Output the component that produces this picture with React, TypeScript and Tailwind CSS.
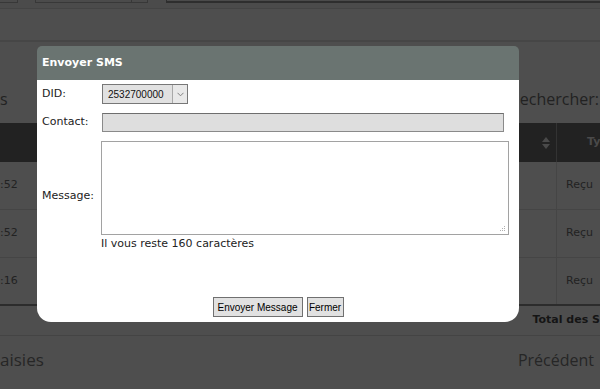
export default function App() {
  const rows = [":52", ":52", ":16"];

  return (
    <div className="relative w-[600px] h-[389px] overflow-hidden bg-[#4e4e4e] font-['DejaVu_Sans',sans-serif]">
      {/* page behind the overlay */}
      <div className="flex flex-col">
        <div className="flex h-[9px] items-start border-b border-[#444444] bg-[#4b4b4b]">
          <div className="h-[3px] w-[18px] border-b border-r border-[#383838]" />
          <div className="ml-[17px] flex h-[3px] w-[113px] border-x border-b border-[#383838]">
            <div className="w-[96px] border-r border-[#383838]" />
          </div>
          <div className="ml-[18px] h-[3px] flex-1 border-l border-b-2 border-[#2e2e2e]" />
        </div>
        <div className="h-[31px]" />
        <div className="h-[2px] bg-[#464646]" />
        <div className="flex h-[81px] items-end justify-between pb-[12px] text-[16px] text-[#222222] font-['Open_Sans',sans-serif]">
          <span>s</span>
          <span className="mr-[1px]">echercher:</span>
        </div>
        <div className="flex h-[39px] bg-[#222222]">
          <div className="flex flex-1 items-center justify-end pr-[6px]">
            <svg width="8" height="12" viewBox="0 0 8 12">
              <path d="M4 0 L8 5 L0 5 Z" fill="#4a4a4a" />
              <path d="M4 12 L8 7 L0 7 Z" fill="#4a4a4a" />
            </svg>
          </div>
          <div className="flex w-[44px] items-center border-l border-[#333333] pl-[30px] text-[11px] font-bold text-[#4a4a4a]">
            Ty
          </div>
        </div>
        {rows.map((t, i) => (
          <div
            key={i}
            className={
              i === 2
                ? "flex h-[48px] border-b-2 border-[#2c2c2c] text-[11px] text-[#222222]"
                : "flex h-[48px] border-b border-[#454545] text-[11px] text-[#222222]"
            }
          >
            <div className="flex flex-1 items-center">{t}</div>
            <div className="flex w-[44px] items-center border-l border-[#454545] pl-[9px]">Reçu</div>
          </div>
        ))}
        <div className="flex h-[30px] items-center justify-end border-b border-[#444444] text-[11px] font-bold text-[#151515] whitespace-nowrap">
          <span>Total des S</span>
        </div>
        <div className="flex h-[48px] items-center justify-between text-[17px] text-[#262626] font-['Open_Sans',sans-serif]">
          <span>aisies</span>
          <span className="mr-[6px] text-[16px]">Précédent</span>
        </div>
      </div>

      {/* dialog */}
      <div className="absolute left-[37px] top-[46px] flex h-[276px] w-[482px] flex-col">
        <div className="flex h-[34px] items-center rounded-t-[5px] bg-[#6a7471] px-[5px] text-[11px] font-bold text-white">
          Envoyer SMS
        </div>
        <div className="flex flex-1 flex-col rounded-b-[14px] bg-white px-[5px] text-[11px] text-[#222222]">
          <div className="mt-[4px] flex h-[20px] items-center">
            <div className="w-[60px]">DID:</div>
            <div className="flex h-[20px] w-[86px] border border-[#777777] bg-[#e1e1e1]">
              <div className="flex flex-1 items-center pl-[5px] font-['Liberation_Sans',sans-serif] text-[10px] text-[#111111]">
                2532700000
              </div>
              <div className="flex w-[15px] items-center justify-center border-l border-[#a8a8a8] bg-[#e8e8e8]">
                <svg width="7" height="5" viewBox="0 0 7 5">
                  <path d="M0.5 0.8 L3.5 3.8 L6.5 0.8" fill="none" stroke="#808080" strokeWidth="1" />
                </svg>
              </div>
            </div>
          </div>
          <div className="mt-[9px] flex h-[19px] items-center">
            <div className="w-[60px]">Contact:</div>
            <div className="h-[19px] w-[402px] border border-[#8a8a8a] border-t-[#6e6e6e] bg-[#dedede]" />
          </div>
          <div className="mt-[9px] flex items-center">
            <div className="w-[59px]">Message:</div>
            <div className="flex flex-col">
              <div className="relative">
                <textarea className="block h-[94px] w-[408px] resize-none border border-[#a2a2a2] bg-white outline-none" />
                <svg className="absolute bottom-[3px] right-[3px]" width="7" height="7" viewBox="0 0 7 7">
                  <rect x="5" y="1" width="1" height="1" fill="#b0b0b0" />
                  <rect x="3" y="3" width="1" height="1" fill="#b0b0b0" />
                  <rect x="5" y="3" width="1" height="1" fill="#b0b0b0" />
                  <rect x="1" y="5" width="1" height="1" fill="#b0b0b0" />
                  <rect x="3" y="5" width="1" height="1" fill="#b0b0b0" />
                  <rect x="5" y="5" width="1" height="1" fill="#b0b0b0" />
                </svg>
              </div>
              <div className="mt-[2px] h-[14px] leading-[14px]">Il vous reste 160 caractères</div>
            </div>
          </div>
          <div className="mt-[46px] flex justify-center gap-[4px] font-['Liberation_Sans',sans-serif] text-[10px] text-black">
            <button className="h-[20px] w-[90px] border border-[#707070] bg-[#e1e1e1]">Envoyer Message</button>
            <button className="h-[20px] w-[37px] border border-[#707070] bg-[#e1e1e1]">Fermer</button>
          </div>
        </div>
      </div>
    </div>
  );
}
